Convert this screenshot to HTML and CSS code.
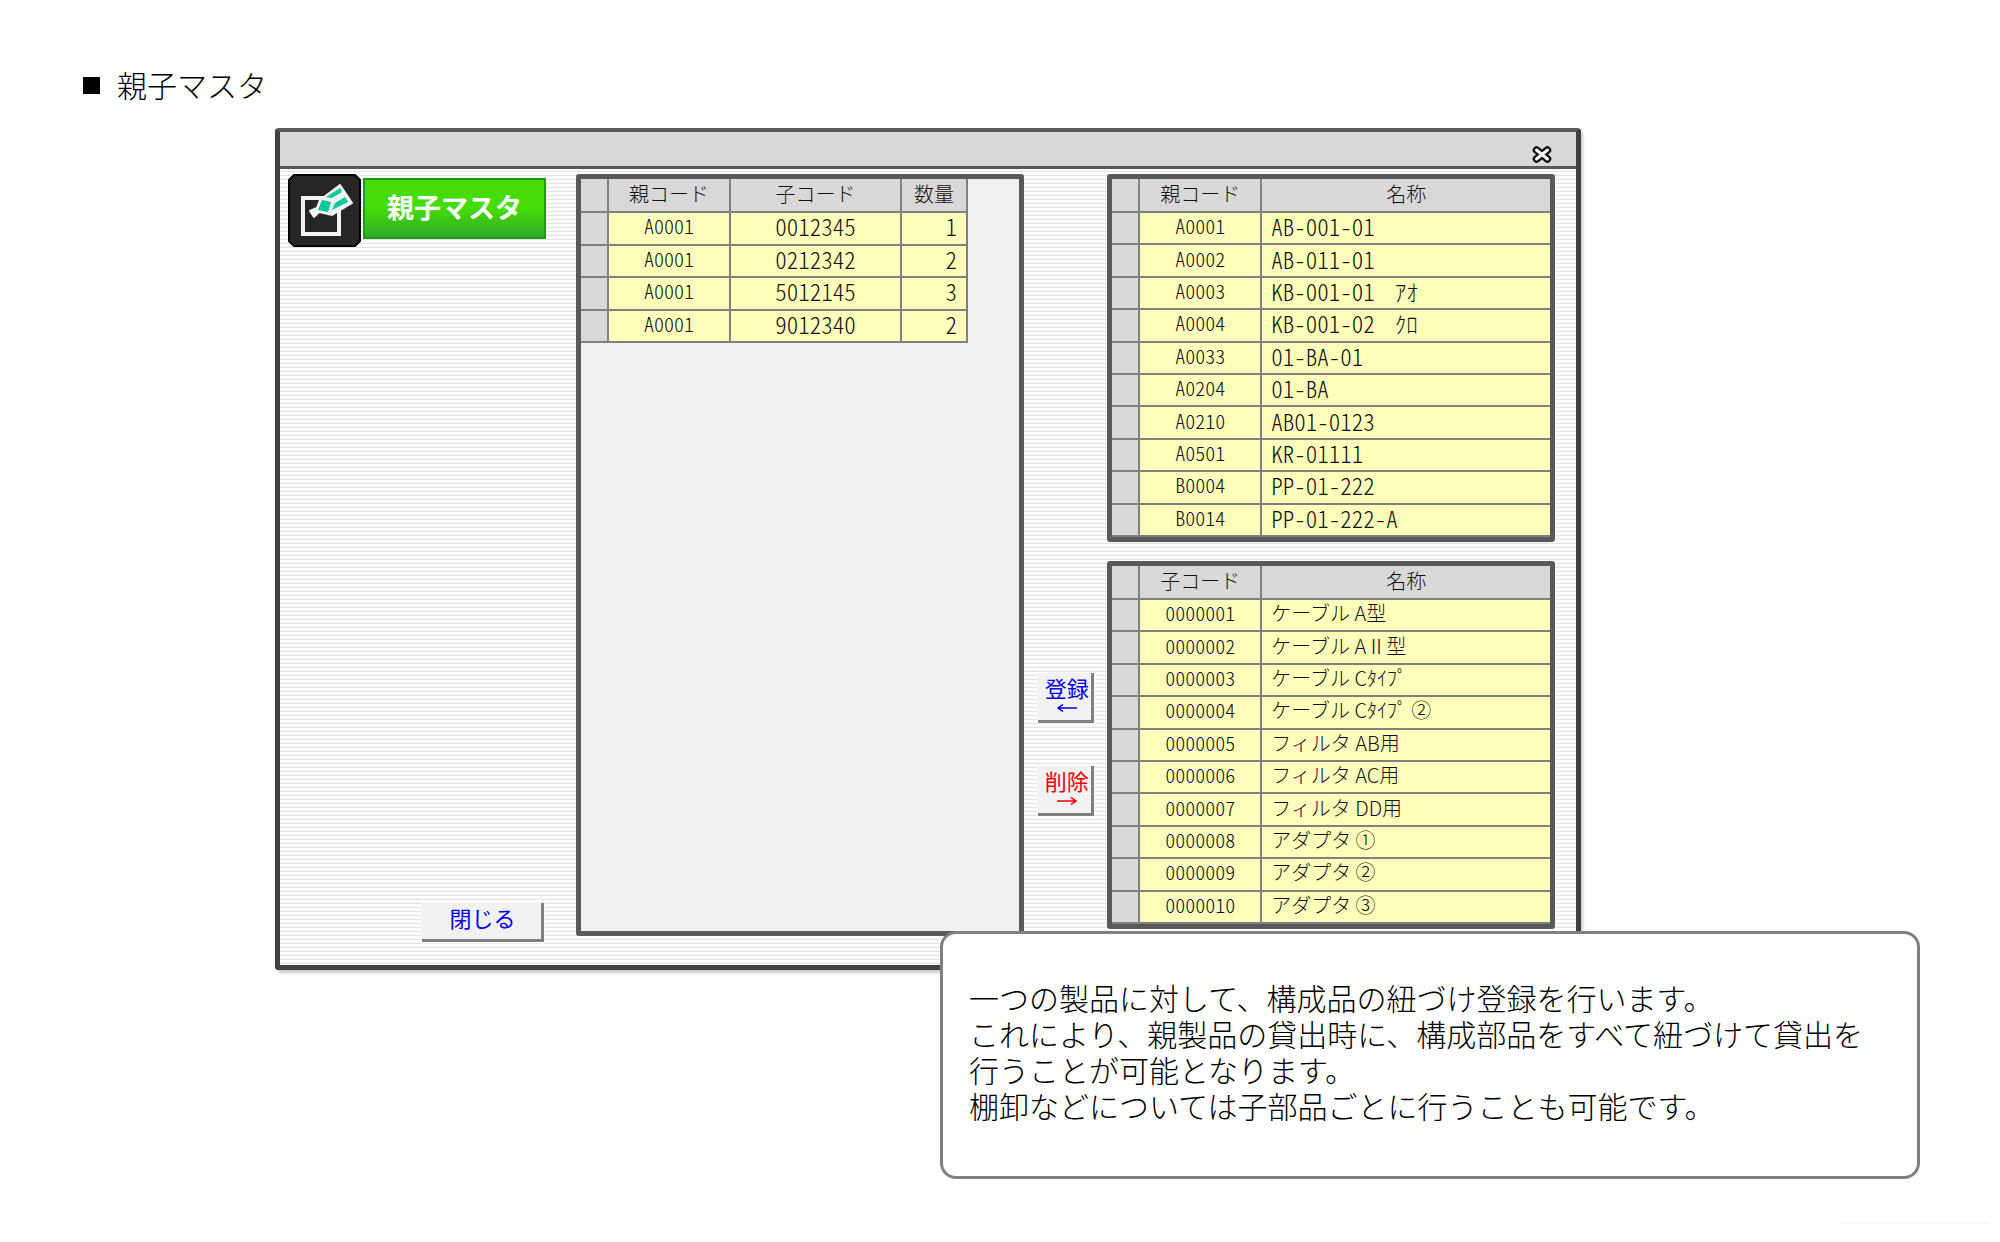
FILE: index.html
```html
<!DOCTYPE html>
<html lang="ja">
<head>
<meta charset="utf-8">
<title>親子マスタ</title>
<link rel="stylesheet" href="styles.css">
</head>
<body>
<main class="page">
  <h1 class="page-title"><span class="marker"></span>親子マスタ</h1>

  <section class="window">
    <header class="titlebar">
      <button class="window-close" type="button" aria-label="ウィンドウを閉じる">
        <svg viewBox="0 0 20 17" width="20" height="17"><path d="M4.500 4 15.500 13M15.500 4 4.500 13" stroke="#111" stroke-width="7.500" stroke-linecap="round"/><path d="M4.500 4 15.500 13M15.500 4 4.500 13" stroke="#fff" stroke-width="3" stroke-linecap="round"/></svg>
      </button>
    </header>

    <div class="content">
      <div class="side">
        <div class="brand">
          <svg class="brand-icon" viewBox="0 0 73 73" width="73" height="73">
            <path d="M6 1H67L72 6V67L67 72H6L1 67V6Z" fill="#262626" stroke="#000" stroke-width="2"/>
            <rect x="15" y="24" width="36" height="36" fill="none" stroke="#f2f2f2" stroke-width="4"/>
            <path d="M22 37 29 34 32 26 52 11 64 29 44 41 36 39 31 38 26 43Z" fill="#f2f2f2" stroke="#f2f2f2" stroke-width="2" stroke-linejoin="round"/>
            <path d="M34 26 43 28 40 38 30 36Z" fill="#04c99a"/>
            <path d="M38 23 52 14 54 18 44 24Z" fill="#04c99a"/>
            <path d="M44 36 47 29 57 23 60 28Z" fill="#04c99a"/>
          </svg>
          <h2 class="brand-title">親子マスタ</h2>
        </div>
        <button class="btn btn-close" type="button">閉じる</button>
      </div>

      <div class="panel panel-relations">
        <table class="grid grid-relations">
          <thead><tr><th class="col-mark"></th><th class="col-code">親コード</th><th class="col-child">子コード</th><th class="col-qty">数量</th></tr></thead>
          <tbody>
            <tr><th></th><td class="code">A0001</td><td class="child">0012345</td><td class="qty">1</td></tr>
            <tr><th></th><td class="code">A0001</td><td class="child">0212342</td><td class="qty">2</td></tr>
            <tr><th></th><td class="code">A0001</td><td class="child">5012145</td><td class="qty">3</td></tr>
            <tr><th></th><td class="code">A0001</td><td class="child">9012340</td><td class="qty">2</td></tr>
          </tbody>
        </table>
      </div>

      <div class="actions">
        <button class="btn btn-move" type="button">登録<svg viewBox="0 0 20 8" width="20" height="8"><path d="M20 4H2M6 0.500 1 4 6 7.500" fill="none" stroke="currentColor" stroke-width="1.500"/></svg></button>
        <button class="btn btn-move btn-delete" type="button">削除<svg viewBox="0 0 20 8" width="20" height="8"><path d="M0 4H18M14 0.500 19 4 14 7.500" fill="none" stroke="currentColor" stroke-width="1.500"/></svg></button>
      </div>

      <div class="masters">
        <div class="panel">
          <table class="grid grid-master">
            <thead><tr><th class="col-mark"></th><th class="col-code">親コード</th><th>名称</th></tr></thead>
            <tbody>
              <tr><th></th><td class="code">A0001</td><td class="model">AB-001-01</td></tr>
              <tr><th></th><td class="code">A0002</td><td class="model">AB-011-01</td></tr>
              <tr><th></th><td class="code">A0003</td><td class="model">KB-001-01<span class="color-name">ｱｵ</span></td></tr>
              <tr><th></th><td class="code">A0004</td><td class="model">KB-001-02<span class="color-name">ｸﾛ</span></td></tr>
              <tr><th></th><td class="code">A0033</td><td class="model">01-BA-01</td></tr>
              <tr><th></th><td class="code">A0204</td><td class="model">01-BA</td></tr>
              <tr><th></th><td class="code">A0210</td><td class="model">AB01-0123</td></tr>
              <tr><th></th><td class="code">A0501</td><td class="model">KR-01111</td></tr>
              <tr><th></th><td class="code">B0004</td><td class="model">PP-01-222</td></tr>
              <tr><th></th><td class="code">B0014</td><td class="model">PP-01-222-A</td></tr>
            </tbody>
          </table>
        </div>
        <div class="panel">
          <table class="grid grid-master">
            <thead><tr><th class="col-mark"></th><th class="col-code">子コード</th><th>名称</th></tr></thead>
            <tbody>
              <tr><th></th><td class="code">0000001</td><td class="part">ケーブル A型</td></tr>
              <tr><th></th><td class="code">0000002</td><td class="part">ケーブル AⅡ型</td></tr>
              <tr><th></th><td class="code">0000003</td><td class="part">ケーブル Cﾀｲﾌﾟ</td></tr>
              <tr><th></th><td class="code">0000004</td><td class="part">ケーブル Cﾀｲﾌﾟ ②</td></tr>
              <tr><th></th><td class="code">0000005</td><td class="part">フィルタ AB用</td></tr>
              <tr><th></th><td class="code">0000006</td><td class="part">フィルタ AC用</td></tr>
              <tr><th></th><td class="code">0000007</td><td class="part">フィルタ DD用</td></tr>
              <tr><th></th><td class="code">0000008</td><td class="part">アダプタ ①</td></tr>
              <tr><th></th><td class="code">0000009</td><td class="part">アダプタ ②</td></tr>
              <tr><th></th><td class="code">0000010</td><td class="part">アダプタ ③</td></tr>
            </tbody>
          </table>
        </div>
      </div>
    </div>
  </section>

  <aside class="callout">
    <p>一つの製品に対して、構成品の紐づけ登録を行います。<br>これにより、親製品の貸出時に、構成部品をすべて紐づけて貸出を<br>行うことが可能となります。<br>棚卸などについては子部品ごとに行うことも可能です。</p>
  </aside>
</main>
<hr class="footer-rule">
</body>
</html>
```
FILE: styles.css
```css
* {
  box-sizing: border-box;
}

body {
  margin: 0;
  background: #fff;
  color: #000;
  font-family: "Noto Sans CJK JP", sans-serif;
  font-weight: 300;
}

.page {
  padding: 62px 4% 43px;
}

.page-title {
  display: flex;
  align-items: center;
  gap: 17px;
  margin: 0 0 22px;
  padding-left: 3px;
  font-size: 30px;
  font-weight: 300;
  line-height: 44px;
}

.marker {
  width: 17px;
  height: 17px;
  margin-top: 2px;
  background: #000;
}

/* application window */
.window {
  width: 71%;
  min-width: 1300px;
  margin-left: 195px;
  border: 5px solid #404040;
  border-top: 4px solid #595959;
  border-radius: 4px;
  background: repeating-linear-gradient(#fff 0 2px, #f8f8f8 2px 3px, #e4e4e4 3px 4px);
  box-shadow: 2px 3px 3px #ccc;
}

.titlebar {
  display: flex;
  justify-content: flex-end;
  align-items: flex-end;
  height: 37px;
  padding: 0 24px 3px 0;
  border-bottom: 3px solid #595959;
  background: #d8d8d8;
}

.window-close {
  display: flex;
  padding: 0;
  border: 0;
  background: none;
}

.content {
  display: grid;
  grid-template-columns: 296px 1fr 83px 1fr;
  grid-template-rows: minmax(768px, auto);
  padding: 5px 21px 23px 0;
}

.side {
  display: flex;
  flex-direction: column;
  justify-content: space-between;
}

.brand {
  display: flex;
  align-items: flex-start;
  gap: 2px;
  padding-left: 8px;
}

.brand-title {
  width: 183px;
  margin: 4px 0 0;
  padding-bottom: 4px;
  border: 2px solid #1f9a12;
  background: linear-gradient(#46dc08 50%, #2faa2a);
  color: #fff;
  font-size: 27px;
  font-weight: 700;
  line-height: 53px;
  text-align: center;
}

.btn {
  padding: 0;
  border: 0 solid #808080;
  border-width: 0 3px 3px 0;
  background: #f2f2f2;
  box-shadow: 0 0 2px 1px #fafafa;
  color: #0000f0;
  font-family: inherit;
  font-size: 22px;
  font-weight: 400;
}

.btn-close {
  width: 122px;
  height: 39px;
  margin-left: 142px;
  padding: 0 0 8px 2px;
  line-height: 28px;
}

.actions {
  display: flex;
  flex-direction: column;
  align-items: flex-start;
  gap: 43px;
  padding: 499px 0 0 14px;
}

.btn-move {
  display: flex;
  flex-direction: column;
  align-items: center;
  gap: 3px;
  width: 56px;
  height: 50px;
  padding: 0 0 0 4px;
  line-height: 28px;
}

.btn-delete {
  color: #f00000;
}

/* bordered list areas */
.panel {
  border: 5px solid #595959;
  border-radius: 3px;
  background: #f1f1f1;
}

.panel-relations {
  margin-bottom: 6px;
}

.masters {
  display: flex;
  flex-direction: column;
  gap: 19px;
}

.grid {
  border-collapse: collapse;
  table-layout: fixed;
  color: #111;
  font-size: 20px;
  line-height: 24px;
}

.grid-relations {
  width: 387px;
  height: 164px;
}

.grid-master {
  width: 100%;
  height: 358px;
}

.grid th,
.grid td {
  padding: 0;
  border: 2px solid #808080;
  font-weight: 300;
}

.grid tr > :first-child {
  border-left: 0;
}

.grid thead th {
  height: 33px;
  padding-bottom: 2px;
  border-top: 0;
}

.grid-master tr > :last-child {
  border-right: 0;
}

.grid th {
  background: #d8d8d8;
}

.grid td {
  padding-bottom: 4px;
  background: #ffffbb;
}

.grid .col-mark {
  width: 27px;
}

.col-code {
  width: 122px;
}

.col-child {
  width: 171px;
}

.grid .code,
.grid .child {
  text-align: center;
}

.grid .code {
  font-feature-settings: "hwid";
}

.grid .child,
.grid .model,
.grid .qty {
  font-size: 23px;
  font-feature-settings: "hwid";
}

.grid .qty {
  padding-right: 9px;
  text-align: right;
}

.grid .model,
.grid .part {
  padding-left: 9px;
}

.color-name {
  margin-left: 20px;
}

/* explanatory note that overlaps the window */
.callout {
  position: relative;
  width: 980px;
  min-height: 248px;
  margin: -39px 0 0 auto;
  padding: 45px 26px;
  border: 3px solid #808080;
  border-radius: 16px;
  background: #fff;
  font-size: 30px;
  line-height: 36px;
}

.callout p {
  margin: 0;
}

.footer-rule {
  width: 151px;
  height: 2px;
  margin: 0 11px 16px auto;
  border: 0;
  background: #f8f8f8;
}
```
